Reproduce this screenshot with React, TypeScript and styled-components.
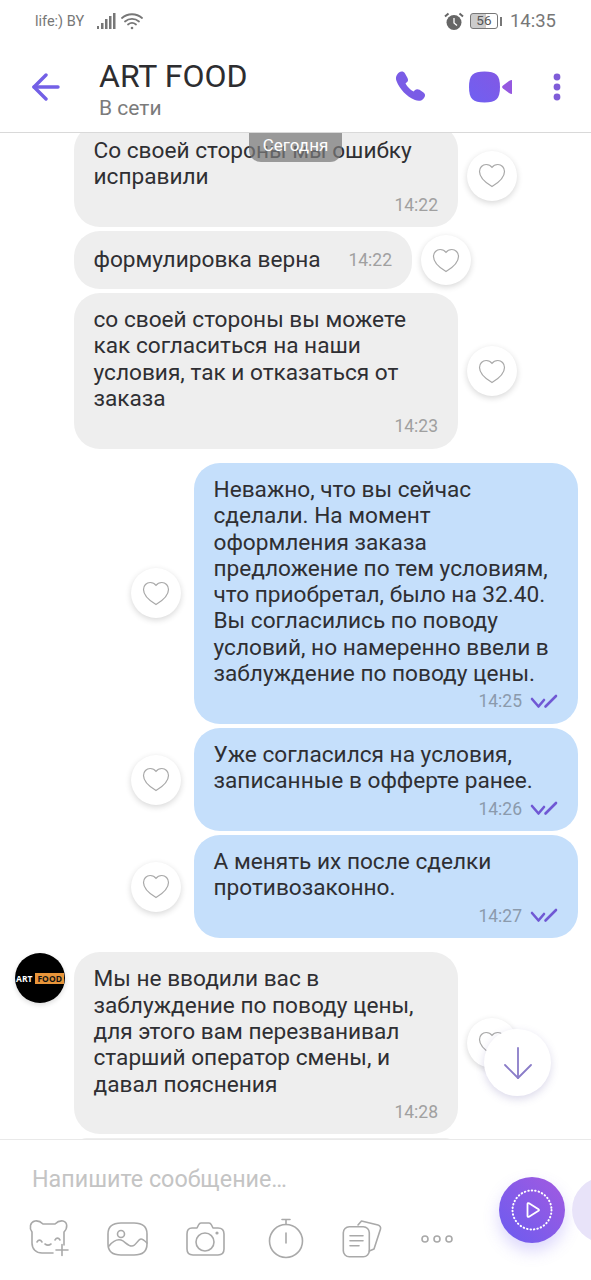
import React from 'react';
import styled, { createGlobalStyle } from 'styled-components';

const GlobalStyle = createGlobalStyle`
	html, body {
		margin: 0;
		padding: 0;
		background: #fff;
	}
	* {
		box-sizing: border-box;
	}
`;

const Screen = styled.div`
	width: 591px;
	height: 1280px;
	display: flex;
	flex-direction: column;
	overflow: hidden;
	background: #fff;
	font-family: Roboto, 'Noto Sans', sans-serif;
	color: #2f2f33;
`;

const StatusBar = styled.div`
	height: 42px;
	flex: none;
	display: flex;
	align-items: center;
	padding: 0 35px;
	color: #777;
`;

const Carrier = styled.span`
	font-size: 14.5px;
	margin-right: 13px;
`;

const NetworkIcons = styled.div`
	display: flex;
	align-items: center;
	gap: 5px;
`;

const StatusRight = styled.div`
	margin-left: auto;
	display: flex;
	align-items: center;
	gap: 6px;
`;

const Battery = styled.div`
	width: 28px;
	height: 16px;
	border: 1.5px solid #777;
	border-radius: 3px;
	font-size: 13.5px;
	line-height: 13px;
	text-align: center;
	color: #555;
	background: linear-gradient(to right, #ccc 56%, #fff 56%);
`;

const BatteryTip = styled.div`
	width: 2px;
	height: 9px;
	margin-left: -4px;
	background: #777;
`;

const Clock = styled.span`
	font-size: 18.5px;
	margin-left: 2px;
`;

const Header = styled.header`
	height: 91px;
	flex: none;
	display: flex;
	align-items: center;
	border-bottom: 1px solid #d9d9d9;
	padding: 0 30px 0 32px;
`;

const BackButton = styled.div`
	width: 67px;
	height: 28px;
	flex: none;
`;

const Contact = styled.div`
	flex: 1;
	display: flex;
	flex-direction: column;
	margin-top: 4px;
`;

const ContactName = styled.div`
	font-size: 32px;
	line-height: 38px;
	color: #2d2d30;
`;

const Presence = styled.div`
	font-size: 21px;
	line-height: 26px;
	color: #7b7b7b;
`;

const HeaderActions = styled.div`
	display: flex;
	align-items: center;
	gap: 41.5px;
`;

const Chat = styled.main`
	flex: 1;
	min-height: 0;
	position: relative;
	overflow: hidden;
`;

const DatePill = styled.div`
	position: absolute;
	top: 0;
	left: 249px;
	width: 93px;
	height: 29px;
	border-radius: 0 0 12px 12px;
	background: rgba(120, 120, 120, 0.72);
	color: #fff;
	font-size: 17px;
	line-height: 25px;
	text-align: center;
`;

const MessageList = styled.div`
	display: flex;
	flex-direction: column;
	gap: 4px;
	margin-top: -9px;
`;

const Row = styled.div<{ $mine?: boolean; $newGroup?: boolean }>`
	display: flex;
	align-items: center;
	gap: ${(p) => (p.$mine ? '13px' : '9px')};
	justify-content: ${(p) => (p.$mine ? 'flex-end' : 'flex-start')};
	padding: ${(p) => (p.$mine ? '0 13px 0 0' : '0 0 0 74px')};
	margin-top: ${(p) => (p.$newGroup ? '10px' : '0')};
	position: relative;
`;

const Bubble = styled.div<{ $mine?: boolean }>`
	width: 384px;
	flex: none;
	padding: 14px 20px 11.6px 19.5px;
	border-radius: 26px;
	background: ${(p) => (p.$mine ? '#c5dffb' : '#eeeeee')};
	font-size: 22.65px;
	line-height: 26.3px;
	white-space: pre-line;
`;

const ShortBubble = styled(Bubble)`
	width: 338px;
	height: 58px;
	padding: 0 20px 0 19.5px;
	display: flex;
	align-items: center;
	justify-content: space-between;
`;

const Meta = styled.div`
	height: 22px;
	margin-top: 3px;
	display: flex;
	align-items: center;
	justify-content: flex-end;
	gap: 8px;
	font-size: 17.5px;
	line-height: 22px;
	color: #a0a0a0;
`;

const MineMeta = styled(Meta)`
	color: #8b9aac;
`;

const Time = styled.span`
	font-size: 17.5px;
	color: #a0a0a0;
`;

const LikeButton = styled.div`
	width: 50px;
	height: 50px;
	flex: none;
	border-radius: 50%;
	background: #fff;
	box-shadow: 0 2px 6px rgba(0, 0, 0, 0.16);
	display: flex;
	align-items: center;
	justify-content: center;
`;

const Avatar = styled.div`
	position: absolute;
	left: 15px;
	top: 1px;
	width: 50px;
	height: 50px;
	border-radius: 50%;
	background: #000;
	box-shadow: 0 2px 5px rgba(0, 0, 0, 0.14);
	display: flex;
	align-items: center;
	justify-content: center;
	gap: 3px;
	font-family: 'Open Sans', sans-serif;
	font-size: 8.5px;
	font-weight: 700;
	color: #fff;
	overflow: hidden;
`;

const LogoAccent = styled.span`
	background: #e8953a;
	color: #111;
	padding: 0 2px;
	line-height: 11px;
`;

const ScrollDown = styled.div`
	position: absolute;
	left: 484px;
	top: 896px;
	width: 67px;
	height: 67px;
	border-radius: 50%;
	background: #fff;
	box-shadow: 0 3px 9px rgba(90, 80, 160, 0.22);
	display: flex;
	align-items: center;
	justify-content: center;
`;

const Footer = styled.footer`
	height: 141px;
	flex: none;
	display: flex;
	border-top: 1px solid #e9e9e9;
	overflow: hidden;
`;

const Composer = styled.div`
	width: 499px;
	flex: none;
	padding: 25px 0 0 30px;
	display: flex;
	flex-direction: column;
`;

const Placeholder = styled.div`
	font-size: 23.3px;
	line-height: 28px;
	color: #c4c4c4;
	padding-left: 2px;
`;

const Tools = styled.div`
	display: flex;
	align-items: center;
	gap: 37.5px;
	margin-top: 25px;
`;

const ToolIcon = styled.svg`
	width: 40px;
	height: 40px;
	flex: none;
	overflow: visible;
	fill: none;
	stroke: #a9a9a9;
	stroke-width: 1.6;
	stroke-linecap: round;
	stroke-linejoin: round;
`;

const SendGroup = styled.div`
	display: flex;
	gap: 7px;
	padding-top: 37px;
	flex: none;
`;

const SendButton = styled.div`
	width: 66px;
	height: 66px;
	flex: none;
	border-radius: 50%;
	background: linear-gradient(45deg, #6a5cf0, #a35ae0);
	box-shadow: 0 8px 16px rgba(115, 96, 242, 0.25);
	display: flex;
	align-items: center;
	justify-content: center;
`;

const NextButton = styled.div`
	width: 66px;
	height: 66px;
	flex: none;
	border-radius: 50%;
	background: #e8e3f9;
`;

const Heart = () => (
	<svg width='28' height='25' viewBox='0 0 28 25' fill='none' stroke='#a8a8a8' strokeWidth='1.2'>
		<path d='M14 23.5C8 20 1.5 15 1.5 8.5 1.5 4.5 4.5 1.5 8.2 1.5c2.4 0 4.5 1 5.8 2.8 1.3-1.8 3.4-2.8 5.8-2.8 3.7 0 6.7 3 6.7 7 0 6.5-6.5 11.5-12.5 15z' />
	</svg>
);

const Ticks = () => (
	<svg width='28' height='15' viewBox='0 0 28 15' fill='none' stroke='#7058d4' strokeWidth='2.6' strokeLinecap='round' strokeLinejoin='round'>
		<path d='M2 5l6.500 7.500L14 6' />
		<path d='M15.500 12.500L26 2' />
	</svg>
);

const SignalIcon = () => (
	<svg width='19' height='17' viewBox='0 0 19 17' fill='#777'>
		<rect x='0' y='13' width='2' height='3' />
		<rect x='4' y='10' width='2.5' height='6' />
		<rect x='8' y='6' width='2.5' height='10' />
		<rect x='12' y='3' width='2.5' height='13' />
		<rect x='16' y='0' width='2.5' height='16' />
	</svg>
);

const WifiIcon = () => (
	<svg width='22' height='18' viewBox='0 0 22 18' fill='none' stroke='#777' strokeWidth='1.8' strokeLinecap='round'>
		<path d='M1 6c5.500-5 14.500-5 20 0' />
		<path d='M4 9.500c4-3.500 10-3.500 14 0' />
		<path d='M7 12.500c2.500-2 5.500-2 8 0' />
		<circle cx='11' cy='16' r='1.3' fill='#777' stroke='none' />
	</svg>
);

const AlarmIcon = () => (
	<svg width='20' height='19' viewBox='0 0 20 19' fill='none'>
		<circle cx='10' cy='10.5' r='7.5' fill='#666' />
		<path d='M10 6v5l3 2.500' stroke='#fff' strokeWidth='1.3' />
		<path d='M1 4.500L4.500 1.500M19 4.500L15.500 1.500' stroke='#666' strokeWidth='2' />
	</svg>
);

const BackIcon = () => (
	<svg width='28' height='28' viewBox='0 0 28 28' fill='none' stroke='#7360e6' strokeWidth='3.4' strokeLinecap='round' strokeLinejoin='round'>
		<path d='M26 14H2' />
		<path d='M14 2L2 14l12 12' />
	</svg>
);

const PhoneIcon = () => (
	<svg width='32' height='32' viewBox='0 0 32 32'>
		<path
			fill='#7a5ce6'
			d='M4 1.500C6 0 8.500 0 10 2.500L12.500 7C13.500 9 13 10.500 11.500 11.500L10.500 12.500C12.500 16 15 18.500 18.500 20.500L19.800 19.300C21 18 22.800 17.800 24.500 18.800L28.500 21.500C30.500 23 30.500 25 29 27C27 30 23.500 30.500 20 29C11.500 25.500 4.500 18 1.500 10C.2 6.500 1.500 3.500 4 1.500Z'
		/>
	</svg>
);

const VideoIcon = () => (
	<svg width='43' height='32' viewBox='0 0 43 32'>
		<defs>
			<linearGradient id='videoFill' x1='0' y1='1' x2='1' y2='0'>
				<stop offset='0' stopColor='#6f60f2' />
				<stop offset='1' stopColor='#8258e4' />
			</linearGradient>
		</defs>
		<path fill='url(#videoFill)' d='M15.500 .5C27 .5 31 4 31 16S27 31.500 15.500 31.500 0 28 0 16 4 .5 15.500 .5z' />
		<path fill='#9558e0' d='M43 9v14c-1 0-2-.4-3-1l-6-4.500c-1.200-1-1.200-2 0-3l6-4.500c1-.6 2-1 3-1z' />
	</svg>
);

const MoreIcon = () => (
	<svg width='8' height='28' viewBox='0 0 8 28' fill='#7f5cd8'>
		<circle cx='4' cy='4' r='3.4' />
		<circle cx='4' cy='14' r='3.4' />
		<circle cx='4' cy='24' r='3.4' />
	</svg>
);

const App = () => {
	return (
		<Screen>
			<GlobalStyle />
			<StatusBar>
				<Carrier>life:) BY</Carrier>
				<NetworkIcons>
					<SignalIcon />
					<WifiIcon />
				</NetworkIcons>
				<StatusRight>
					<AlarmIcon />
					<Battery>56</Battery>
					<BatteryTip />
					<Clock>14:35</Clock>
				</StatusRight>
			</StatusBar>
			<Header>
				<BackButton>
					<BackIcon />
				</BackButton>
				<Contact>
					<ContactName>ART FOOD</ContactName>
					<Presence>В сети</Presence>
				</Contact>
				<HeaderActions>
					<PhoneIcon />
					<VideoIcon />
					<MoreIcon />
				</HeaderActions>
			</Header>
			<Chat>
				<MessageList>
					<Row>
						<Bubble>
							{'Со своей стороны мы ошибку\nисправили'}
							<Meta>14:22</Meta>
						</Bubble>
						<LikeButton>
							<Heart />
						</LikeButton>
					</Row>
					<Row>
						<ShortBubble>
							формулировка верна
							<Time>14:22</Time>
						</ShortBubble>
						<LikeButton>
							<Heart />
						</LikeButton>
					</Row>
					<Row>
						<Bubble>
							{'со своей стороны вы можете\nкак согласиться на наши\nусловия, так и отказаться от\nзаказа'}
							<Meta>14:23</Meta>
						</Bubble>
						<LikeButton>
							<Heart />
						</LikeButton>
					</Row>
					<Row $mine $newGroup>
						<LikeButton>
							<Heart />
						</LikeButton>
						<Bubble $mine>
							{'Неважно, что вы сейчас\nсделали. На момент\nоформления заказа\nпредложение по тем условиям,\nчто приобретал, было на 32.40.\nВы согласились по поводу\nусловий, но намеренно ввели в\nзаблуждение по поводу цены.'}
							<MineMeta>
								14:25
								<Ticks />
							</MineMeta>
						</Bubble>
					</Row>
					<Row $mine>
						<LikeButton>
							<Heart />
						</LikeButton>
						<Bubble $mine>
							{'Уже согласился на условия,\nзаписанные в офферте ранее.'}
							<MineMeta>
								14:26
								<Ticks />
							</MineMeta>
						</Bubble>
					</Row>
					<Row $mine>
						<LikeButton>
							<Heart />
						</LikeButton>
						<Bubble $mine>
							{'А менять их после сделки\nпротивозаконно.'}
							<MineMeta>
								14:27
								<Ticks />
							</MineMeta>
						</Bubble>
					</Row>
					<Row $newGroup>
						<Avatar>
							ART<LogoAccent>FOOD</LogoAccent>
						</Avatar>
						<Bubble>
							{'Мы не вводили вас в\nзаблуждение по поводу цены,\nдля этого вам перезванивал\nстарший оператор смены, и\nдавал пояснения'}
							<Meta>14:28</Meta>
						</Bubble>
						<LikeButton>
							<Heart />
						</LikeButton>
					</Row>
					<Row>
						<Bubble />
					</Row>
				</MessageList>
				<DatePill>Сегодня</DatePill>
				<ScrollDown>
					<svg width='30' height='34' viewBox='0 0 30 34' fill='none' stroke='#8a7cc8' strokeWidth='1.8' strokeLinecap='round' strokeLinejoin='round'>
						<path d='M15 2v30' />
						<path d='M2 19l13 13 13-13' />
					</svg>
				</ScrollDown>
			</Chat>
			<Footer>
				<Composer>
					<Placeholder>Напишите сообщение…</Placeholder>
					<Tools>
						<ToolIcon viewBox='0 0 40 40'>
							<path d='M23 35H12C6 35 2 31 2 25V14C-1 10 0 4 5 3 8 2.500 11 4 13 6H25C27 4 30 2.500 33 3 37.500 4 38 10 34 14V27' />
							<path d='M7 24c1.500-2.500 3.500-2.500 5 0M25 22c1.500-2.500 3.500-2.500 5 0M15 26c2 1.500 4 1.500 6 0' />
							<path d='M32 26.500v11M26 32h12' />
						</ToolIcon>
						<ToolIcon viewBox='0 0 40 40'>
							<path d='M13 5h13c9 0 13 4 13 11v10c0 7-4 11-13 11H13C4 37 0 33 0 26V16C0 9 4 5 13 5z' />
							<circle cx='13' cy='16' r='3.5' />
							<path d='M1 28C5 23 9 21 13 22 17 23 19 28 24 28 28 28 30 21 33 21 35 21 37 23 39 25' />
						</ToolIcon>
						<ToolIcon viewBox='0 0 40 40'>
							<path d='M7 10h5l1.500-3c.5-1 1-2 2.500-2h8c1.500 0 2 1 2.500 2L28 10h5c4 0 6 2 6 6v15c0 4-2 6-6 6H8c-4 0-6-2-6-6V16c0-4 2-6 5-6z' />
							<circle cx='20' cy='24' r='9' />
							<circle cx='32' cy='15' r='.8' fill='#a9a9a9' />
						</ToolIcon>
						<ToolIcon viewBox='0 0 40 40'>
							<circle cx='23' cy='23' r='16.5' />
							<path d='M23 6.500V1.500M19 1.500h8M23 15v10' />
						</ToolIcon>
						<ToolIcon viewBox='0 0 40 40'>
							<rect x='3.3' y='8.7' width='26' height='30' rx='6' />
							<path d='M10 17.700h13M10 22.700h13M10 27.700h9' />
							<path d='M18 7l3.500-4L38 7c2 .5 3 2.500 2.500 4L34 31l-4.700 2' />
						</ToolIcon>
						<ToolIcon viewBox='0 0 40 40'>
							<circle cx='7' cy='21' r='3' />
							<circle cx='19' cy='21' r='3' />
							<circle cx='31' cy='21' r='3' />
						</ToolIcon>
					</Tools>
				</Composer>
				<SendGroup>
					<SendButton>
						<svg width='42' height='42' viewBox='0 0 42 42' fill='none' stroke='#fff'>
							<circle cx='21' cy='21' r='19.5' strokeWidth='2' strokeDasharray='.5 3' strokeLinecap='round' />
							<path d='M16.500 15v12c0 .8.800 1.200 1.500.8l9.500-6c.6-.4.6-1.200 0-1.600l-9.500-6c-.7-.4-1.500 0-1.500.8z' strokeWidth='1.8' strokeLinejoin='round' />
						</svg>
					</SendButton>
					<NextButton />
				</SendGroup>
			</Footer>
		</Screen>
	);
};

export default App;
